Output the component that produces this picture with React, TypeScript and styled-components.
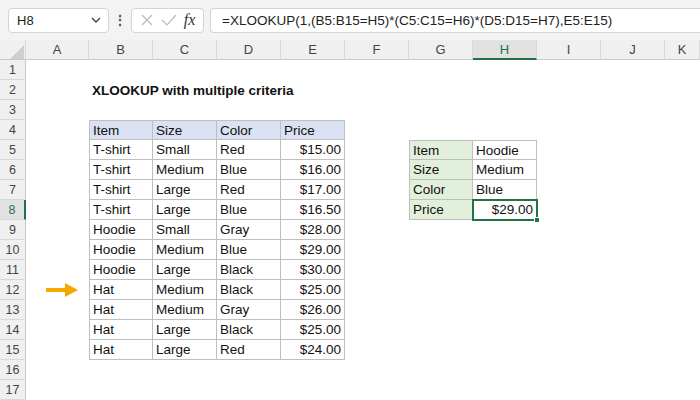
import React from "react";
import styled, { createGlobalStyle } from "styled-components";

const Global = createGlobalStyle`
  body { margin:0; background:#fff; font-family:"Liberation Sans", Arial, sans-serif; }
  * { box-sizing:border-box; }
`;

const Page = styled.div`width:700px;height:400px;overflow:hidden;display:flex;flex-direction:column;background:#fff;`;
const Bar = styled.div`height:40px;background:#f3f3f3;display:flex;align-items:center;padding:0 0 0 8px;gap:0;`;
const NameBox = styled.div`width:101px;height:25px;background:#fff;border:1px solid #d4d4d4;border-radius:4px;display:flex;align-items:center;justify-content:space-between;padding:0 6px 0 8px;font-size:13px;color:#222;`;
const Dots = styled.div`width:22px;display:flex;justify-content:center;color:#555;font-size:14px;font-weight:bold;`;
const FxBox = styled.div`width:73px;height:25px;background:#fff;border:1px solid #d4d4d4;border-radius:4px;display:flex;align-items:center;justify-content:space-around;padding:0 4px;`;
const Fx = styled.span`font-family:"Liberation Serif",serif;font-style:italic;font-size:16px;color:#333;`;
const Formula = styled.div`flex:1;margin-left:6px;height:25px;background:#fff;border:1px solid #d4d4d4;border-right:none;border-radius:4px 0 0 4px;display:flex;align-items:center;padding-left:11px;font-size:13.5px;color:#222;white-space:nowrap;`;
const Sheet = styled.div`display:grid;grid-template-columns:26px 63px repeat(9,64px) 1fr;grid-auto-rows:20px;position:relative;`;
const Head = styled.div<{ $sel?: boolean; $corner?: boolean }>`
  background:${p => (p.$sel ? "#e1e1e1" : "#f0f0f0")};
  border-right:1px solid #d8d8d8;border-bottom:${p => (p.$sel ? "2px solid #217346" : "1px solid #c8c8c8")};
  display:flex;align-items:center;justify-content:center;font-size:13px;color:${p => (p.$sel ? "#217346" : "#444")};
`;
const RowHead = styled.div<{ $sel?: boolean }>`
  background:${p => (p.$sel ? "#e1e1e1" : "#f0f0f0")};
  border-bottom:1px solid #d8d8d8;border-right:${p => (p.$sel ? "2px solid #217346" : "1px solid #c8c8c8")};
  display:flex;align-items:center;justify-content:center;font-size:12.5px;color:${p => (p.$sel ? "#217346" : "#444")};
`;
const Cell = styled.div<{ $b?: boolean; $top?: boolean; $left?: boolean; $fill?: string; $right?: boolean; $bold?: boolean; $sel?: boolean }>`
  position:relative;display:flex;align-items:center;padding:0 3px;font-size:13.5px;color:#111;white-space:nowrap;overflow:visible;
  justify-content:${p => (p.$right ? "flex-end" : "flex-start")};
  font-weight:${p => (p.$bold ? "bold" : "normal")};
  background:${p => p.$fill || "transparent"};
  border-right:${p => (p.$b ? "1px solid #bfbfbf" : "none")};
  border-bottom:${p => (p.$b ? "1px solid #bfbfbf" : "none")};
  border-top:${p => (p.$top ? "1px solid #bfbfbf" : "none")};
  border-left:${p => (p.$left ? "1px solid #bfbfbf" : "none")};
  ${p => p.$sel && `outline:2px solid #217346;outline-offset:-1px;z-index:2;`}
`;
const Handle = styled.span`position:absolute;right:-4px;bottom:-4px;width:6px;height:6px;background:#217346;border:1px solid #fff;`;
const Arrow = styled.svg`position:absolute;left:46px;top:242px;`;

const data = [
  ["T-shirt","Small","Red","$15.00"],["T-shirt","Medium","Blue","$16.00"],["T-shirt","Large","Red","$17.00"],
  ["T-shirt","Large","Blue","$16.50"],["Hoodie","Small","Gray","$28.00"],["Hoodie","Medium","Blue","$29.00"],
  ["Hoodie","Large","Black","$30.00"],["Hat","Medium","Black","$25.00"],["Hat","Medium","Gray","$26.00"],
  ["Hat","Large","Black","$25.00"],["Hat","Large","Red","$24.00"],
];
const side: Record<number,[string,string]> = {5:["Item","Hoodie"],6:["Size","Medium"],7:["Color","Blue"],8:["Price","$29.00"]};
const cols = ["A","B","C","D","E","F","G","H","I","J","K"];

export default function App() {
  const rows: React.ReactNode[] = [];
  for (let r = 1; r <= 17; r++) {
    rows.push(<RowHead key={`h${r}`} $sel={r===8}>{r}</RowHead>);
    for (let c = 0; c < 11; c++) {
      const k = `${r}-${c}`;
      let el: React.ReactNode = <Cell key={k} />;
      if (r === 2 && c === 1) el = <Cell key={k} $bold>XLOOKUP with multiple criteria</Cell>;
      if (r >= 4 && r <= 15 && c >= 1 && c <= 4) {
        const i = c - 1;
        const txt = r === 4 ? ["Item","Size","Color","Price"][i] : data[r-5][i];
        el = <Cell key={k} $b $top={r===4} $left={c===1} $fill={r===4?"#d9e1f2":undefined} $right={r>4&&c===4}>{txt}</Cell>;
      }
      if (side[r] && (c === 6 || c === 7)) {
        const sel = r===8 && c===7;
        el = <Cell key={k} $b $top={r===5} $left={c===6} $fill={c===6?"#e2efda":undefined} $right={sel} $sel={sel}>
          {side[r][c-6]}{sel && <Handle/>}</Cell>;
      }
      rows.push(el);
    }
  }
  return (
    <Page>
      <Global />
      <Bar>
        <NameBox><span>H8</span><svg width="12" height="8" viewBox="0 0 12 8"><path d="M2 2l4 4 4-4" stroke="#444" strokeWidth="1.4" fill="none"/></svg></NameBox>
        <Dots>⋮</Dots>
        <FxBox>
          <svg width="14" height="14" viewBox="0 0 14 14"><path d="M2 2l10 10M12 2L2 12" stroke="#bbb" strokeWidth="1.2"/></svg>
          <svg width="16" height="14" viewBox="0 0 16 14"><path d="M1 7l5 5 9-10" stroke="#bbb" strokeWidth="1.2" fill="none"/></svg>
          <Fx>fx</Fx>
        </FxBox>
        <Formula>=XLOOKUP(1,(B5:B15=H5)*(C5:C15=H6)*(D5:D15=H7),E5:E15)</Formula>
      </Bar>
      <Sheet>
        <Head $corner><svg width="14" height="14" viewBox="0 0 14 14" style={{marginLeft:8,marginTop:4}}><path d="M14 0v14H0z" fill="#cfcfcf"/></svg></Head>
        {cols.map(c => <Head key={c} $sel={c==="H"}>{c}</Head>)}
        {rows}
        <Arrow width="34" height="16" viewBox="0 0 34 16"><path d="M1 8h20" stroke="#f5a800" strokeWidth="4" strokeLinecap="round"/><path d="M19 1l13 7-13 7z" fill="#f5a800"/></Arrow>
      </Sheet>
    </Page>
  );
}
